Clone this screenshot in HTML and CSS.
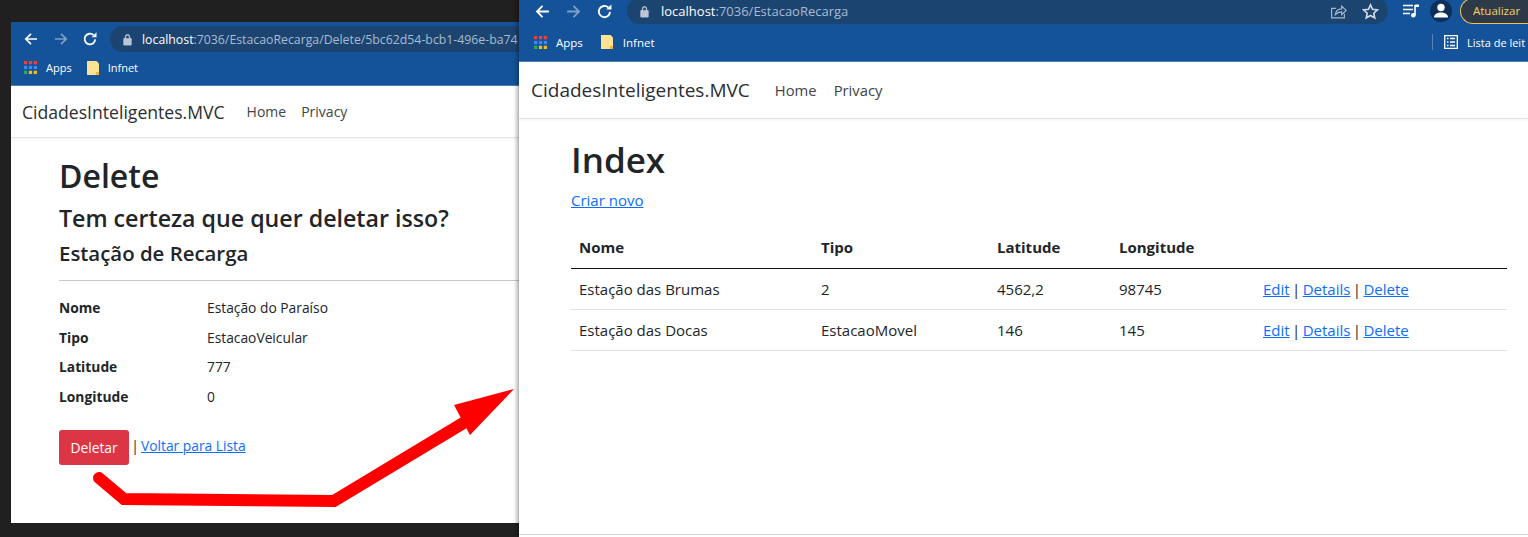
FILE: index.html
```html
<!DOCTYPE html>
<html lang="pt">
<head>
<meta charset="utf-8">
<title>Estação de Recarga</title>
<link rel="stylesheet" href="styles.css">
</head>
<body>
<section class="window win-left">
  <div class="chrome">
    <div class="toolbar">
      <svg class="nav-ic" viewBox="0 0 16 16"><path d="M14 8H3M8 2.8 2.8 8 8 13.2" fill="none" stroke="#fff" stroke-width="1.7"/></svg>
      <svg class="nav-ic dim" viewBox="0 0 16 16"><path d="M2 8h11M8 2.8 13.2 8 8 13.2" fill="none" stroke="#7f9fc8" stroke-width="1.7"/></svg>
      <svg class="nav-ic" viewBox="0 0 16 16"><path d="M13.2 8.4A5.3 5.3 0 1 1 11.6 4.2" fill="none" stroke="#fff" stroke-width="1.8"/><path d="M9.6 6.2h4.9V1.3z" fill="#fff"/></svg>
      <div class="omnibox">
        <svg class="lock" viewBox="0 0 12 14"><path d="M2 6h8v7H2zM3.6 6V4a2.4 2.4 0 0 1 4.8 0v2" fill="#bcc6d4" stroke="#bcc6d4" stroke-width="1"/><path d="M4.6 5.5V4a1.4 1.4 0 0 1 2.8 0v1.5z" fill="#1c4470"/></svg>
        <span class="url"><b>localhost</b>:7036/EstacaoRecarga/Delete/5bc62d54-bcb1-496e-ba74</span>
      </div>
    </div>
    <div class="bookmarks">
      <svg class="apps" viewBox="0 0 12 12"><g><path fill="#ea4335" d="M0 0h3v3H0z"/><path fill="#ea4335" d="M4.5 0h3v3h-3z"/><path fill="#ea4335" d="M9 0h3v3H9z"/><path fill="#4285f4" d="M0 4.5h3v3H0z"/><path fill="#4285f4" d="M4.5 4.5h3v3h-3z"/><path fill="#4285f4" d="M9 4.5h3v3H9z"/><path fill="#34a853" d="M0 9h3v3H0z"/><path fill="#fbbc04" d="M4.5 9h3v3h-3z"/><path fill="#fbbc04" d="M9 9h3v3H9z"/></g></svg>
      <span class="bm-label">Apps</span>
      <svg class="folder" viewBox="0 0 12 14"><path d="M0 0h9.500l2.500 2.500V14H0z" fill="#fde293"/><path d="M9 11h3v3H9z" fill="#f2b632"/></svg>
      <span class="bm-label">Infnet</span>
    </div>
  </div>
  <nav class="navbar">
    <span class="brand">CidadesInteligentes.MVC</span>
    <span class="nav-link">Home</span>
    <span class="nav-link">Privacy</span>
  </nav>
  <main class="delete-page">
    <h1>Delete</h1>
    <h3>Tem certeza que quer deletar isso?</h3>
    <h4>Estação de Recarga</h4>
    <hr>
    <dl class="details">
      <dt>Nome</dt><dd>Estação do Paraíso</dd>
      <dt>Tipo</dt><dd>EstacaoVeicular</dd>
      <dt>Latitude</dt><dd>777</dd>
      <dt>Longitude</dt><dd>0</dd>
    </dl>
    <div class="actions">
      <button class="btn-danger" type="button">Deletar</button>
      <span class="sep">|</span>
      <a class="back" href="#">Voltar para Lista</a>
    </div>
  </main>
</section>

<section class="window win-right">
  <div class="chrome">
    <div class="toolbar">
      <svg class="nav-ic" viewBox="0 0 16 16"><path d="M14 8H3M8 2.8 2.8 8 8 13.2" fill="none" stroke="#fff" stroke-width="1.7"/></svg>
      <svg class="nav-ic dim" viewBox="0 0 16 16"><path d="M2 8h11M8 2.8 13.2 8 8 13.2" fill="none" stroke="#7f9fc8" stroke-width="1.7"/></svg>
      <svg class="nav-ic" viewBox="0 0 16 16"><path d="M13.2 8.4A5.3 5.3 0 1 1 11.6 4.2" fill="none" stroke="#fff" stroke-width="1.8"/><path d="M9.6 6.2h4.900V1.300z" fill="#fff"/></svg>
      <div class="omnibox">
        <svg class="lock" viewBox="0 0 12 14"><path d="M2 6h8v7H2zM3.6 6V4a2.4 2.4 0 0 1 4.8 0v2" fill="#bcc6d4" stroke="#bcc6d4" stroke-width="1"/><path d="M4.600 5.500V4a1.400 1.400 0 0 1 2.800 0v1.500z" fill="#1c4470"/></svg>
        <span class="url"><b>localhost</b>:7036/EstacaoRecarga</span>
        <span class="omni-icons">
          <svg class="omni-ic" viewBox="0 0 16 16"><path d="M13.500 10v4H1.500V5h4" fill="none" stroke="#a9b7c9" stroke-width="1.100"/><path d="M5 11c.5-3.500 3-5.500 6-5.500V3l4.200 4-4.200 4V8.300c-2.500 0-4.500 1-6 2.700z" fill="none" stroke="#a9b7c9" stroke-width="1.100"/></svg>
          <svg class="omni-ic" viewBox="0 0 16 16"><path d="m8 1.800 1.900 4.200 4.600.5-3.400 3.100.9 4.500-4-2.300-4 2.300.9-4.500-3.400-3.100 4.600-.5z" fill="none" stroke="#d5dce6" stroke-width="1.500"/></svg>
        </span>
      </div>
      <svg class="media" viewBox="0 0 18 16"><path d="M1 2.500h10M1 6.500h10M1 10.500h7" stroke="#fff" stroke-width="1.600"/><path d="M13 2v10" stroke="#fff" stroke-width="1.600"/><path d="M13 1.500h4V4h-4z" fill="#fff"/><circle cx="11.300" cy="12.300" r="2.300" fill="#fff"/></svg>
      <span class="avatar"><svg viewBox="0 0 22 22"><circle cx="11" cy="7.500" r="3.700" fill="#fff"/><path d="M4 17.500c0-3.500 3.500-5 7-5s7 1.500 7 5z" fill="#fff"/></svg></span>
      <span class="update">Atualizar</span>
    </div>
    <div class="bookmarks">
      <svg class="apps" viewBox="0 0 12 12"><g><path fill="#ea4335" d="M0 0h3v3H0z"/><path fill="#ea4335" d="M4.500 0h3v3h-3z"/><path fill="#ea4335" d="M9 0h3v3H9z"/><path fill="#4285f4" d="M0 4.500h3v3H0z"/><path fill="#4285f4" d="M4.500 4.500h3v3h-3z"/><path fill="#4285f4" d="M9 4.500h3v3H9z"/><path fill="#34a853" d="M0 9h3v3H0z"/><path fill="#fbbc04" d="M4.500 9h3v3h-3z"/><path fill="#fbbc04" d="M9 9h3v3H9z"/></g></svg>
      <span class="bm-label">Apps</span>
      <svg class="folder" viewBox="0 0 12 14"><path d="M0 0h9.500l2.500 2.500V14H0z" fill="#fde293"/><path d="M9 11h3v3H9z" fill="#f2b632"/></svg>
      <span class="bm-label">Infnet</span>
      <span class="reading">
        <svg class="read-ic" viewBox="0 0 14 14"><path d="M.7.700h12.600v12.600H.700z" fill="none" stroke="#fff" stroke-width="1.300"/><path d="M3 3.500h1.500M6 3.500h5M3 7h1.500M6 7h5M3 10.500h1.500M6 10.500h5" stroke="#fff" stroke-width="1.400"/></svg>
        <span class="bm-label">Lista de leit</span>
      </span>
    </div>
  </div>
  <nav class="navbar">
    <span class="brand">CidadesInteligentes.MVC</span>
    <span class="nav-link">Home</span>
    <span class="nav-link">Privacy</span>
  </nav>
  <main class="index-page">
    <h1>Index</h1>
    <p class="create"><a href="#">Criar novo</a></p>
    <table>
      <thead>
        <tr><th class="c1">Nome</th><th class="c2">Tipo</th><th class="c3">Latitude</th><th class="c4">Longitude</th><th></th></tr>
      </thead>
      <tbody>
        <tr><td>Estação das Brumas</td><td>2</td><td>4562,2</td><td>98745</td><td class="row-actions"><a href="#">Edit</a> | <a href="#">Details</a> | <a href="#">Delete</a></td></tr>
        <tr><td>Estação das Docas</td><td>EstacaoMovel</td><td>146</td><td>145</td><td class="row-actions"><a href="#">Edit</a> | <a href="#">Details</a> | <a href="#">Delete</a></td></tr>
      </tbody>
    </table>
  </main>
</section>

<svg class="arrow" viewBox="0 0 1528 537" aria-hidden="true">
  <path d="M99 478 124 499 334 501 470 419" fill="none" stroke="#fe0000" stroke-width="12" stroke-linecap="round" stroke-linejoin="miter"/>
  <path d="M514 389 454 405 470 435z" fill="#fe0000"/>
</svg>
</body>
</html>
```
FILE: styles.css
```css
* { box-sizing: border-box; }
html, body { margin: 0; height: 100%; }
body {
  position: relative;
  overflow: hidden;
  background: #202020;
  font-family: "Open Sans", "Noto Sans", "Liberation Sans", sans-serif;
  color: #212529;
}
a { color: #0d6efd; }
.window {
  position: absolute;
  background: #fff;
  display: flex;
  flex-direction: column;
  overflow: hidden;
}
.win-left { left: 11px; top: 22px; width: 508px; height: 501px; }
.win-right {
  left: 519px; top: -6px; width: 1009px; height: 543px;
  box-shadow: -2px 0 4px rgba(0, 0, 0, .35);
}
.chrome { background: #14539a; flex: none; color: #fff; }
.toolbar { display: flex; align-items: center; }
.win-left .toolbar { height: 30px; padding: 4px 0 0 12px; }
.win-right .toolbar { height: 30px; padding: 4px 0 0 15px; }
.nav-ic { width: 16px; height: 16px; flex: none; margin-right: 14px; }
.win-left .nav-ic:nth-child(2) { margin-right: 13px; }
.win-left .nav-ic:nth-child(3) { margin-right: 12px; }
.win-right .nav-ic { width: 17px; height: 17px; }
.omnibox {
  display: flex;
  align-items: center;
  height: 26px;
  background: #1c4470;
  border-radius: 13px 0 0 13px;
  padding-left: 12px;
  flex: 1;
  min-width: 0;
  white-space: nowrap;
  overflow: hidden;
}
.win-right .omnibox { flex: none; width: 761px; border-radius: 13px; }
.lock { width: 11px; height: 13px; flex: none; margin-right: 9px; }
.url { font-size: 12.300px; color: #a9bbd2; }
.win-right .url { font-size: 13px; margin-left: 2px; }
.url b { font-weight: 400; color: #fff; }
.omni-icons { margin-left: auto; display: flex; gap: 15px; padding-right: 9px; }
.omni-ic { width: 17px; height: 17px; }
.media { width: 18px; height: 16px; margin-left: 14px; flex: none; }
.avatar {
  width: 22px; height: 22px; margin-left: 10px; border-radius: 50%;
  background: #0e2f5a; flex: none; display: block;
}
.avatar svg { display: block; }
.update {
  margin-left: 8px; flex: 1; height: 26px; padding-left: 12px;
  background: #2f3a48; border: 1px solid #f2c14e; border-right: 0;
  border-radius: 13px 0 0 13px; color: #f7d25f; font-size: 11.500px; line-height: 23px;
}
.bookmarks { display: flex; align-items: center; height: 33px; font-size: 11px; padding: 0 0 2px 13px; white-space: nowrap; }
.win-right .bookmarks { height: 37px; padding: 0 0 1px 15px; font-size: 11.500px; }
.apps { width: 13px; height: 13px; flex: none; margin-right: 9px; }
.folder { width: 12px; height: 14px; flex: none; margin: 0 9px 0 15px; }
.win-right .folder { margin-left: 18px; margin-right: 10px; }
.bm-label { color: #fff; }
.reading { margin-left: auto; width: 96px; display: flex; align-items: center; border-left: 1px solid #5c83b5; height: 16px; padding-left: 11px; flex: none; }
.reading .bm-label { font-size: 11px; }
.read-ic { width: 14px; height: 14px; flex: none; margin-right: 9px; }
.navbar {
  display: flex;
  align-items: center;
  flex: none;
  border-top: 1px solid #4c7cb4;
  border-bottom: 1px solid #e3e3e8;
  box-shadow: 0 1px 3px rgba(0, 0, 0, .05);
  white-space: nowrap;
}
.win-left .navbar { height: 53px; padding: 0 0 0 11px; }
.win-right .navbar { height: 58px; padding: 0 0 1px 12px; }
.brand { font-size: 17.600px; color: #2a2e33; }
.win-right .brand { font-size: 19px; }
.nav-link { font-size: 14px; color: #40444a; }
.win-right .nav-link { font-size: 14.800px; }
.brand + .nav-link { margin-left: 22px; }
.win-right .brand + .nav-link { margin-left: 25px; }
.nav-link + .nav-link { margin-left: 15px; }
.win-right .nav-link + .nav-link { margin-left: 17px; }
h1, h3, h4 { margin: 0; font-weight: 600; }
.delete-page { padding: 17px 0 0 48px; }
.delete-page h1 { font-size: 32px; line-height: 42px; }
.delete-page h3 { font-size: 23.200px; line-height: 30px; margin-top: 6px; }
.delete-page h4 { font-size: 20.400px; line-height: 28px; margin-top: 6px; }
hr { height: 1px; border: 0; background: #c8c8c8; margin: 13px 0 0; }
.details {
  display: grid;
  grid-template-columns: 148px 1fr;
  margin: 12px 0 0;
  font-size: 13.800px;
  grid-auto-rows: 29.500px;
  align-items: center;
}
.details dt { font-weight: 700; }
.details dd { margin: 0; }
.actions { display: flex; align-items: center; gap: 4px; font-size: 13.800px; margin-top: 19px; }
.sep { width: 4px; display: flex; justify-content: center; margin-bottom: 5px; }
.back { margin-bottom: 5px; }
.btn-danger {
  width: 70px; height: 35px; padding: 0; border: 0; border-radius: 3px;
  background: #dc3545; color: #fff; font: inherit;
}
.index-page {
  flex: 1;
  margin-bottom: 2px;
  border-bottom: 1px solid #d8d8d8;
  padding: 18px 21px 0 52px;
}
.index-page h1 { font-size: 35px; line-height: 46px; }
.create { margin: 7px 0 0; font-size: 15px; line-height: 20px; }
table { width: 100%; border-collapse: collapse; margin-top: 17px; font-size: 15px; table-layout: fixed; }
th { text-align: left; font-weight: 700; height: 41px; padding: 0 8px; border-bottom: 1px solid #111; }
td { height: 41px; padding: 0 8px; border-bottom: 1px solid #dee2e6; }
.row-actions { word-spacing: -1.500px; }
.c1 { width: 242px; }
.c2 { width: 176px; }
.c3 { width: 122px; }
.c4 { width: 144px; }
.arrow { position: absolute; left: 0; top: 0; width: 1528px; height: 537px; pointer-events: none; }
```
